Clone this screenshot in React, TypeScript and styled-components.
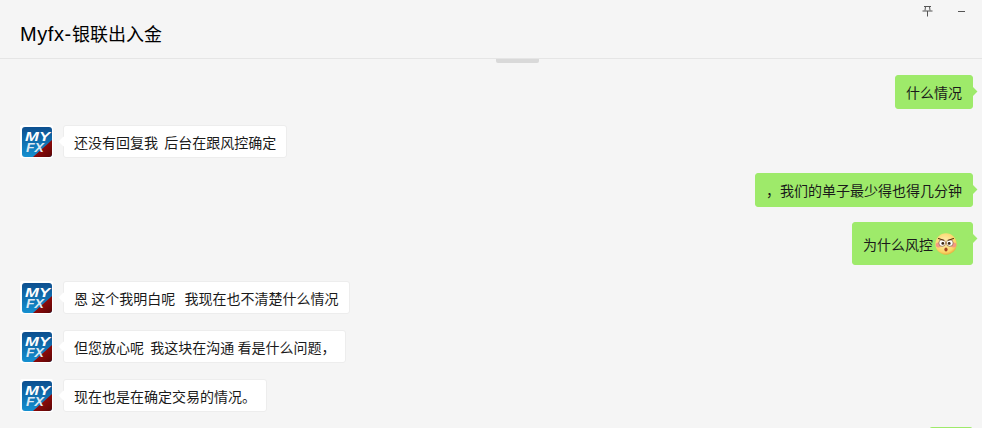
import React from "react";
import styled, { createGlobalStyle } from "styled-components";

const Global = createGlobalStyle`
  html, body {
    margin: 0;
    padding: 0;
    background: #f5f5f5;
    overflow: hidden;
  }
`;

const Page = styled.div`
  width: 982px;
  height: 428px;
  overflow: hidden;
  position: relative;
  background: #f5f5f5;
  font-family: "Noto Sans CJK SC", "Liberation Sans", sans-serif;
`;

const Header = styled.div`
  box-sizing: border-box;
  height: 59px;
  border-bottom: 1px solid #e5e5e5;
  display: flex;
  align-items: center;
  padding: 9px 0 0 20px;
`;

const Title = styled.div`
  font-size: 18px;
  color: #000;
  line-height: 24px;
`;

const TitleLatin = styled.span`
  font-family: "Liberation Sans", sans-serif;
  font-size: 20px;
  letter-spacing: 0.6px;
`;

const WinButtons = styled.div`
  position: absolute;
  top: 6px;
  right: 17px;
  display: flex;
  gap: 25px;
  align-items: center;
`;

const Thumb = styled.div`
  position: absolute;
  top: 59px;
  left: 496px;
  width: 43px;
  height: 4px;
  background: #d9d9d9;
  border-radius: 0 0 2px 2px;
`;

const List = styled.div`
  display: flex;
  flex-direction: column;
  padding: 1px 9px 0 20px;
`;

const Row = styled.div<{ $mine?: boolean }>`
  display: flex;
  justify-content: ${({ $mine }) => ($mine ? "flex-end" : "flex-start")};
  align-items: flex-start;
  margin-top: ${({ $mine }) => ($mine ? "15px" : "16px")};
`;

const Bubble = styled.div<{ $mine?: boolean }>`
  position: relative;
  box-sizing: border-box;
  height: ${({ $mine }) => ($mine ? "auto" : "33px")};
  min-height: 34px;
  min-height: ${({ $mine }) => ($mine ? "34px" : "33px")};
  padding: 0 10px;
  font-size: 14px;
  line-height: 20px;
  color: #1a1a1a;
  white-space: pre;
  border-radius: 3px;
  display: flex;
  align-items: center;
  border: 1px solid ${({ $mine }) => ($mine ? "#9eea6a" : "#ededed")};
  background: ${({ $mine }) => ($mine ? "#9eea6a" : "#ffffff")};
  margin-left: ${({ $mine }) => ($mine ? "0" : "10px")};
  &::before {
    content: "";
    position: absolute;
    top: 12px;
    width: 7px;
    height: 7px;
    background: inherit;
    transform: rotate(45deg);
    ${({ $mine }) => ($mine ? "right: -4px;" : "left: -4px;")}
  }
`;

const TallBubbleContent = styled.div`
  display: flex;
  align-items: center;
  height: 41px;
  padding-right: 5px;
`;

const AvatarFrame = styled.div`
  width: 33px;
  height: 33px;
  flex: none;
  background: #fff;
  border-radius: 2px;
  display: flex;
  align-items: center;
  justify-content: center;
`;

const Stub = styled.div`
  width: 22px;
  height: 2px;
`;

function Avatar({ id }: { id: string }) {
  return (
    <AvatarFrame>
      <svg width="30" height="30" viewBox="0 0 30 30">
        <defs>
          <linearGradient id={`blue${id}`} x1="0" y1="0" x2="0" y2="1">
            <stop offset="0" stopColor="#0d4f8f" />
            <stop offset="1" stopColor="#1590d0" />
          </linearGradient>
          <linearGradient id={`red${id}`} x1="0" y1="0" x2="1" y2="1">
            <stop offset="0" stopColor="#c00d0d" />
            <stop offset="1" stopColor="#5a0606" />
          </linearGradient>
        </defs>
        <rect width="30" height="30" rx="3" fill={`url(#blue${id})`} />
        <path d="M30 13V27a3 3 0 0 1-3 3H11z" fill={`url(#red${id})`} />
        <text x="3" y="14" fontFamily="Liberation Sans" fontWeight="700" fontStyle="italic" fontSize="12.5" fill="#fff" textLength="25" lengthAdjust="spacingAndGlyphs">MY</text>
        <text x="4" y="25" fontFamily="Liberation Sans" fontWeight="700" fontStyle="italic" fontSize="12.5" fill="#dfeaf3" textLength="18" lengthAdjust="spacingAndGlyphs">FX</text>
      </svg>
    </AvatarFrame>
  );
}

function Emoji() {
  return (
    <svg width="22" height="22" viewBox="0 0 22 22" style={{ marginLeft: 2 }}>
      <defs>
        <radialGradient id="face" cx="0.45" cy="0.4" r="0.65">
          <stop offset="0" stopColor="#fff0b8" />
          <stop offset="0.75" stopColor="#fbd566" />
          <stop offset="1" stopColor="#e29f2e" />
        </radialGradient>
      </defs>
      <circle cx="11" cy="11" r="10.7" fill="url(#face)" />
      <ellipse cx="3.6" cy="12" rx="2.8" ry="2.4" fill="#f58d86" opacity="0.85" />
      <ellipse cx="18.4" cy="12" rx="2.8" ry="2.4" fill="#f58d86" opacity="0.85" />
      <circle cx="7.2" cy="10" r="3.4" fill="#fff" stroke="#8a5a2a" strokeWidth="0.7" />
      <circle cx="14.8" cy="10" r="3.4" fill="#fff" stroke="#8a5a2a" strokeWidth="0.7" />
      <circle cx="7.8" cy="10.4" r="1.4" fill="#3a2410" />
      <circle cx="14.2" cy="10.4" r="1.4" fill="#3a2410" />
      <path d="M3.5 5.5l5 1.8M18.5 5.5l-5 1.8" stroke="#5a3410" strokeWidth="1.1" strokeLinecap="round" />
      <ellipse cx="11" cy="16.5" rx="1.6" ry="1.9" fill="#a8451f" />
    </svg>
  );
}

function Incoming({ id, text }: { id: string; text: string }) {
  return (
    <Row>
      <Avatar id={id} />
      <Bubble>{text}</Bubble>
    </Row>
  );
}

function Outgoing({ children }: { children: React.ReactNode }) {
  return (
    <Row $mine>
      <Bubble $mine>{children}</Bubble>
    </Row>
  );
}

export default function App() {
  return (
    <Page>
      <Global />
      <Header>
        <Title>
          <TitleLatin>Myfx-</TitleLatin>银联出入金
        </Title>
      </Header>
      <WinButtons>
        <svg width="11" height="11" viewBox="0 0 11 11">
          <path d="M2 .5h7M3.5.5l-.5 4M7.5.5l.5 4M.5 5h10M5.5 5v5.5" stroke="#555" strokeWidth="1" fill="none" />
        </svg>
        <svg width="7" height="9" viewBox="0 0 7 9">
          <path d="M0 4.5h7" stroke="#555" strokeWidth="1" />
        </svg>
      </WinButtons>
      <Thumb />
      <List>
        <Outgoing>什么情况</Outgoing>
        <Incoming id="a" text="还没有回复我  后台在跟风控确定" />
        <Outgoing>，我们的单子最少得也得几分钟</Outgoing>
        <Outgoing>
          <TallBubbleContent>
            为什么风控
            <Emoji />
          </TallBubbleContent>
        </Outgoing>
        <Incoming id="b" text="恩 这个我明白呢   我现在也不清楚什么情况" />
        <Incoming id="c" text="但您放心呢  我这块在沟通 看是什么问题，" />
        <Incoming id="d" text="现在也是在确定交易的情况。" />
        <Outgoing>
          <Stub />
        </Outgoing>
      </List>
    </Page>
  );
}
